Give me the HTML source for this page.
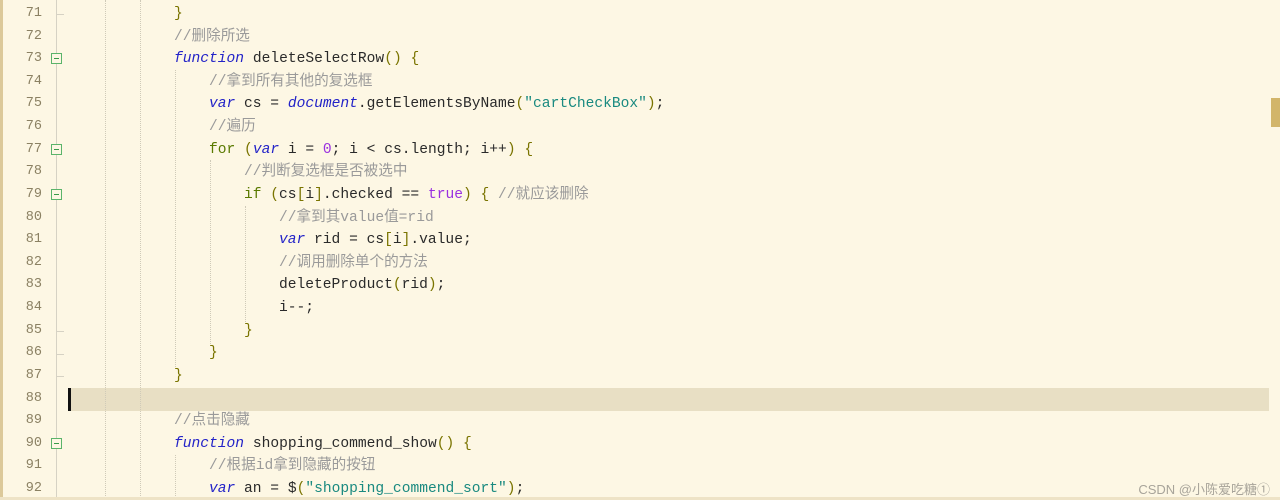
<!DOCTYPE html>
<html><head><meta charset="utf-8"><style>
body{margin:0;width:1280px;height:500px;overflow:hidden;background:#fdf7e4;position:relative;font-family:"Liberation Mono","Noto Sans CJK SC",monospace;}
.lb{position:absolute;left:0;top:0;width:3px;height:500px;background:#dcc99a;}
.bb{position:absolute;left:0;bottom:0;width:1280px;height:3px;background:#eee3c6;}
.ln{position:absolute;left:0;width:42px;text-align:right;font-size:13.5px;line-height:22px;height:22px;color:#8b8163;font-family:"Liberation Mono",monospace;}
.code{position:absolute;left:0;font-size:14.6px;line-height:22px;height:22px;white-space:pre;color:#2a2a2a;}
.code span{line-height:22px;vertical-align:top;}
.fl{position:absolute;left:56px;width:1px;background:#d6d2c4;}
.fb{position:absolute;left:51px;width:9px;height:9px;border:1px solid #5bb46a;background:#fdf7e4;}
.fb:after{content:"";position:absolute;left:2px;top:4px;width:5px;height:1px;background:#3a9a4a;}
.tk{position:absolute;left:56px;width:8px;height:1px;background:#d6d2c4;}
.g{position:absolute;width:0;border-left:1px dotted #cfcab8;}
.hl{position:absolute;left:68px;top:388px;width:1201px;height:23px;background:#e8dfc4;}
.cur{position:absolute;left:68px;top:388px;width:3px;height:23px;background:#111;}
.kw{color:#2323c8;font-style:italic}
.ct{color:#5a7a00}
.p{color:#7a7400}
.cm{color:#9a9a9a}
.s{color:#1a8a80}
.n{color:#9a30e0}
.sb{position:absolute;left:1271px;top:98px;width:9px;height:29px;background:#d2b56a;}
.wm{position:absolute;right:10px;top:479px;font-family:"Liberation Sans","Noto Sans CJK SC",sans-serif;font-size:13px;color:#a8a49a;}
</style></head><body>
<div class="lb"></div>
<div class="hl"></div>
<div class="g" style="left:105px;top:0;height:500px"></div>
<div class="g" style="left:140px;top:0;height:500px"></div>
<div class="g" style="left:175px;top:70px;height:297px"></div>
<div class="g" style="left:175px;top:455px;height:45px"></div>
<div class="g" style="left:210px;top:160px;height:184px"></div>
<div class="g" style="left:245px;top:206px;height:116px"></div>
<div class="fl" style="top:0;height:500px"></div>
<div class="tk" style="top:14px"></div>
<div class="tk" style="top:331px"></div>
<div class="tk" style="top:354px"></div>
<div class="tk" style="top:376px"></div>
<div class="fb" style="top:53px"></div>
<div class="fb" style="top:144px"></div>
<div class="fb" style="top:189px"></div>
<div class="fb" style="top:438px"></div>
<div class="cur"></div>
<div class="ln" style="top:3px">71</div>
<div class="ln" style="top:26px">72</div>
<div class="ln" style="top:48px">73</div>
<div class="ln" style="top:71px">74</div>
<div class="ln" style="top:93px">75</div>
<div class="ln" style="top:116px">76</div>
<div class="ln" style="top:139px">77</div>
<div class="ln" style="top:161px">78</div>
<div class="ln" style="top:184px">79</div>
<div class="ln" style="top:207px">80</div>
<div class="ln" style="top:229px">81</div>
<div class="ln" style="top:252px">82</div>
<div class="ln" style="top:274px">83</div>
<div class="ln" style="top:297px">84</div>
<div class="ln" style="top:320px">85</div>
<div class="ln" style="top:342px">86</div>
<div class="ln" style="top:365px">87</div>
<div class="ln" style="top:388px">88</div>
<div class="ln" style="top:410px">89</div>
<div class="ln" style="top:433px">90</div>
<div class="ln" style="top:455px">91</div>
<div class="ln" style="top:478px">92</div>
<div class="code" style="left:174px;top:3px"><span class="p">}</span></div>
<div class="code" style="left:174px;top:26px"><span class="cm">//删除所选</span></div>
<div class="code" style="left:174px;top:48px"><span class="kw">function</span> deleteSelectRow<span class="p">()</span> <span class="p">{</span></div>
<div class="code" style="left:209px;top:71px"><span class="cm">//拿到所有其他的复选框</span></div>
<div class="code" style="left:209px;top:93px"><span class="kw">var</span> cs = <span class="kw">document</span>.getElementsByName<span class="p">(</span><span class="s">"cartCheckBox"</span><span class="p">)</span>;</div>
<div class="code" style="left:209px;top:116px"><span class="cm">//遍历</span></div>
<div class="code" style="left:209px;top:139px"><span class="ct">for</span> <span class="p">(</span><span class="kw">var</span> i = <span class="n">0</span>; i &lt; cs.length; i++<span class="p">)</span> <span class="p">{</span></div>
<div class="code" style="left:244px;top:161px"><span class="cm">//判断复选框是否被选中</span></div>
<div class="code" style="left:244px;top:184px"><span class="ct">if</span> <span class="p">(</span>cs<span class="p">[</span>i<span class="p">]</span>.checked == <span class="n">true</span><span class="p">)</span> <span class="p">{</span> <span class="cm">//就应该删除</span></div>
<div class="code" style="left:279px;top:207px"><span class="cm">//拿到其value值=rid</span></div>
<div class="code" style="left:279px;top:229px"><span class="kw">var</span> rid = cs<span class="p">[</span>i<span class="p">]</span>.value;</div>
<div class="code" style="left:279px;top:252px"><span class="cm">//调用删除单个的方法</span></div>
<div class="code" style="left:279px;top:274px">deleteProduct<span class="p">(</span>rid<span class="p">)</span>;</div>
<div class="code" style="left:279px;top:297px">i--;</div>
<div class="code" style="left:244px;top:320px"><span class="p">}</span></div>
<div class="code" style="left:209px;top:342px"><span class="p">}</span></div>
<div class="code" style="left:174px;top:365px"><span class="p">}</span></div>
<div class="code" style="left:174px;top:410px"><span class="cm">//点击隐藏</span></div>
<div class="code" style="left:174px;top:433px"><span class="kw">function</span> shopping_commend_show<span class="p">()</span> <span class="p">{</span></div>
<div class="code" style="left:209px;top:455px"><span class="cm">//根据id拿到隐藏的按钮</span></div>
<div class="code" style="left:209px;top:478px"><span class="kw">var</span> an = $<span class="p">(</span><span class="s">"shopping_commend_sort"</span><span class="p">)</span>;</div>
<div class="sb"></div>
<div class="wm">CSDN @小陈爱吃糖①</div>
<div class="bb"></div>
</body></html>
